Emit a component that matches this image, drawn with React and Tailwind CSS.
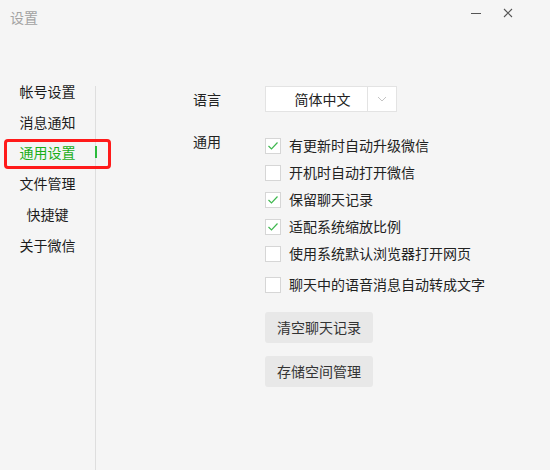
import React from 'react';

const font = { fontFamily: '"Noto Sans CJK SC", "Microsoft YaHei", sans-serif' };

const menu = ['帐号设置', '消息通知', '通用设置', '文件管理', '快捷键', '关于微信'];

const options = [
    { label: '有更新时自动升级微信', checked: true },
    { label: '开机时自动打开微信', checked: false },
    { label: '保留聊天记录', checked: true },
    { label: '适配系统缩放比例', checked: true },
    { label: '使用系统默认浏览器打开网页', checked: false },
    { label: '聊天中的语音消息自动转成文字', checked: false, gap: true },
];

function Checkbox({ checked }) {
    return (
        <div className="w-[16px] h-[16px] border border-[#d6d6d6] bg-white flex items-center justify-center">
            {checked && (
                <svg width="12" height="10" viewBox="0 0 12 10" fill="none">
                    <path d="M1.5 5 L4.5 8 L10.5 1.5" stroke="#3fb84f" strokeWidth="1.2" />
                </svg>
            )}
        </div>
    );
}

export default function App() {
    const active = 2;

    return (
        <div className="relative w-[550px] h-[470px] bg-[#f5f5f5] flex flex-col overflow-hidden" style={font}>
            {/* title bar */}
            <div className="h-[34px] flex items-start justify-between pl-[10px] pr-[37px] pt-[7px]">
                <span className="text-[14px] leading-[20px] text-[#a3a3a3]">设置</span>
                <div className="flex items-center gap-[22px] mt-[1px] h-[10px]">
                    <div className="w-[10px] h-px bg-[#555]" />
                    <svg width="10" height="10" viewBox="0 0 10 10">
                        <path d="M1 1 L9 9 M9 1 L1 9" stroke="#555" strokeWidth="1.1" />
                    </svg>
                </div>
            </div>

            <div className="flex flex-1">
                {/* sidebar */}
                <div className="w-[95px] pt-[42px] flex flex-col">
                    {menu.map((item, i) => (
                        <div
                            key={item}
                            className={`relative h-[30.8px] flex items-center justify-center text-[14px] ${
                                i === active ? 'text-[#1aad19]' : 'text-[#1c1c1c]'
                            }`}
                        >
                            {item}
                            {i === active && (
                                <span className="absolute left-[95px] top-[8px] w-[2px] h-[12px] bg-[#2bbb3c]" />
                            )}
                        </div>
                    ))}
                </div>
                <div className="w-px mt-[52px] bg-[#dedede]" />

                {/* settings */}
                <div className="flex-1 pl-[97px] pt-[52px] text-[14px] text-[#333]">
                    <div className="flex items-center h-[26px]">
                        <span className="w-[72px] text-[#222]">语言</span>
                        <div className="flex h-[26px] w-[132px] bg-white border border-[#e3e3e3]">
                            <div className="flex-1 flex items-center justify-center pl-[12px] text-[#222]">简体中文</div>
                            <div className="w-[29px] border-l border-[#e3e3e3] flex items-center justify-center">
                                <svg width="10" height="6" viewBox="0 0 10 6" fill="none">
                                    <path d="M1 1 L5 5 L9 1" stroke="#c4c4c4" strokeWidth="1" />
                                </svg>
                            </div>
                        </div>
                    </div>

                    <div className="flex mt-[20px]">
                        <span className="w-[72px] leading-[20px] -mt-[1px] text-[#222]">通用</span>
                        <div className="flex flex-col">
                            {options.map((o) => (
                                <div key={o.label} className={`flex items-center h-[27px] ${o.gap ? 'mt-[4px]' : ''}`}>
                                    <Checkbox checked={o.checked} />
                                    <span className="ml-[8px] text-[#222]">{o.label}</span>
                                </div>
                            ))}
                            <button className="mt-[14px] w-[108px] h-[31px] rounded-[3px] bg-[#e8e8e8] text-[14px] text-[#333]">
                                清空聊天记录
                            </button>
                            <button className="mt-[13px] w-[108px] h-[31px] rounded-[3px] bg-[#e8e8e8] text-[14px] text-[#333]">
                                存储空间管理
                            </button>
                        </div>
                    </div>
                </div>
            </div>

            {/* highlight around the active menu entry */}
            <div className="absolute left-[4px] top-[139px] w-[107px] h-[30px] border-[3px] border-[#ff1a1a] rounded-[4px] pointer-events-none" />
        </div>
    );
}
